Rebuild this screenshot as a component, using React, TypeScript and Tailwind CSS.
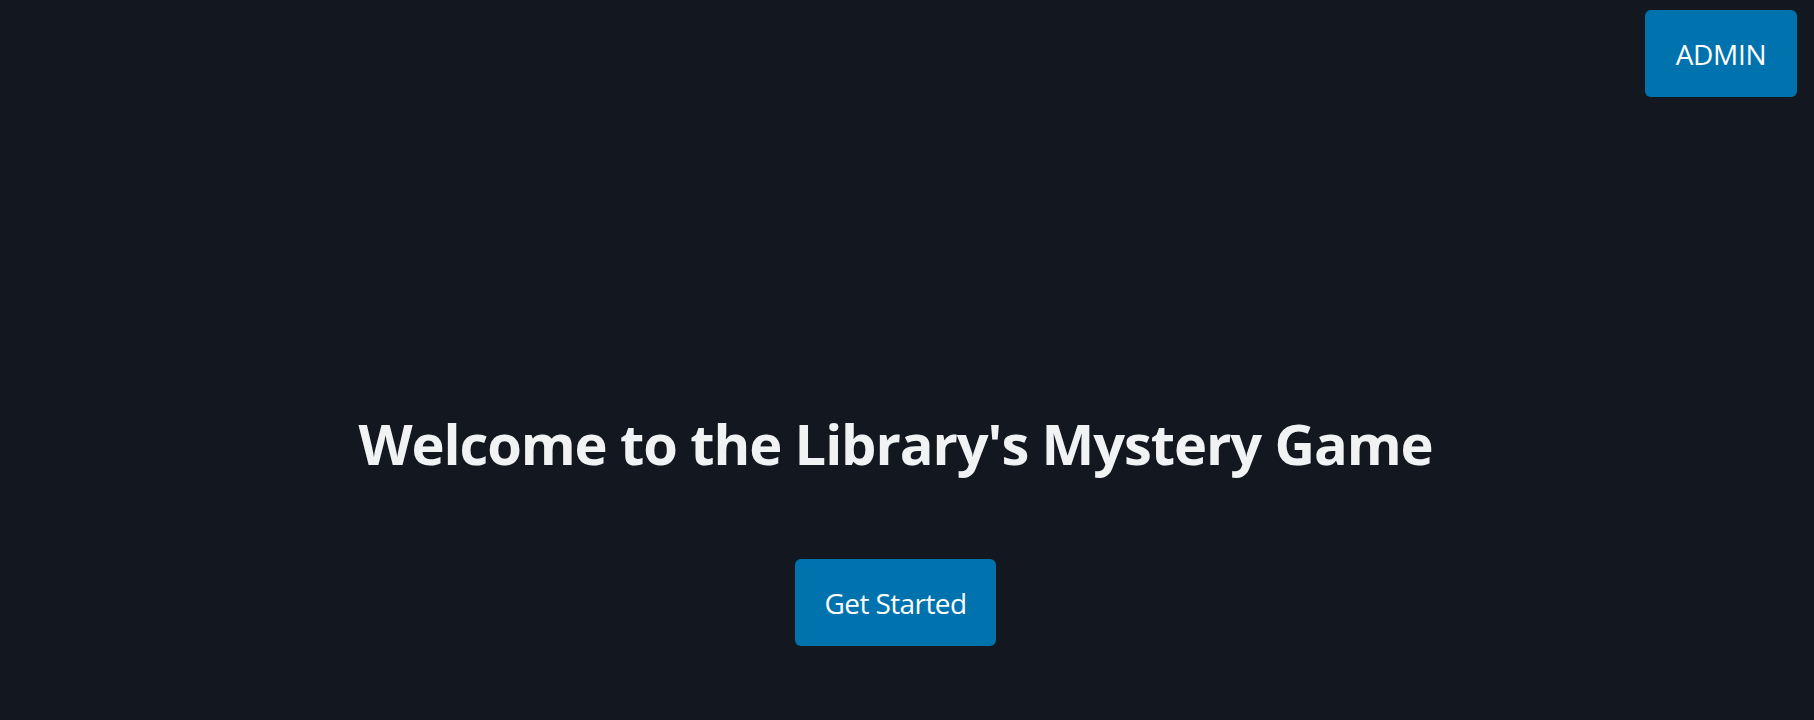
import React from "react";

export default function App() {
  return (
    <div
      className="flex h-[720px] w-full flex-col bg-[#13171f]"
      style={{ fontFamily: '"Open Sans", "Noto Sans", sans-serif' }}
    >
      <header className="flex justify-end pr-[17px] pt-[10px]">
        <button className="flex h-[87px] w-[152px] items-center justify-center rounded-md bg-[#0073ae] text-[28px] tracking-[-0.3px] text-white">
          ADMIN
        </button>
      </header>
      <main className="flex w-[1791px] flex-col items-center pt-[308px]">
        <h1 className="text-[56px] font-bold leading-[76px] tracking-[-1.1px] text-[#f1f2f4]">
          Welcome to the Library's Mystery Game
        </h1>
        <button className="mt-[78px] flex h-[87px] w-[201px] items-center justify-center rounded-md bg-[#0073ae] text-[28px] tracking-[-0.6px] text-white">
          Get Started
        </button>
      </main>
    </div>
  );
}
